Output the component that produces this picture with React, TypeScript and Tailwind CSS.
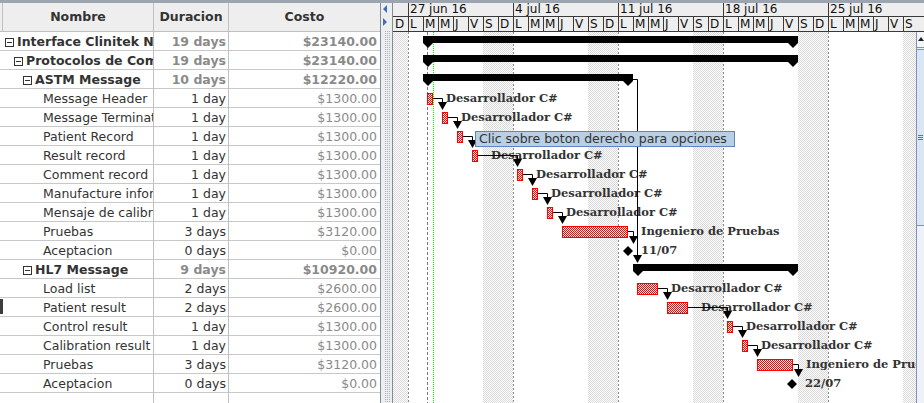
import React from "react";

type Row = {
  name: string;
  level: number;
  group?: boolean;
  dur: string;
  cost: string;
};

const rows: Row[] = [
  { name: "Interface Clinitek Novus", level: 0, group: true, dur: "19 days", cost: "$23140.00" },
  { name: "Protocolos de Comunicacion", level: 1, group: true, dur: "19 days", cost: "$23140.00" },
  { name: "ASTM Message", level: 2, group: true, dur: "10 days", cost: "$12220.00" },
  { name: "Message Header", level: 3, dur: "1 day", cost: "$1300.00" },
  { name: "Message Terminator", level: 3, dur: "1 day", cost: "$1300.00" },
  { name: "Patient Record", level: 3, dur: "1 day", cost: "$1300.00" },
  { name: "Result record", level: 3, dur: "1 day", cost: "$1300.00" },
  { name: "Comment record", level: 3, dur: "1 day", cost: "$1300.00" },
  { name: "Manufacture information", level: 3, dur: "1 day", cost: "$1300.00" },
  { name: "Mensaje de calibracion", level: 3, dur: "1 day", cost: "$1300.00" },
  { name: "Pruebas", level: 3, dur: "3 days", cost: "$3120.00" },
  { name: "Aceptacion", level: 3, dur: "0 days", cost: "$0.00" },
  { name: "HL7 Message", level: 2, group: true, dur: "9 days", cost: "$10920.00" },
  { name: "Load list", level: 3, dur: "2 days", cost: "$2600.00" },
  { name: "Patient result", level: 3, dur: "2 days", cost: "$2600.00" },
  { name: "Control result", level: 3, dur: "1 day", cost: "$1300.00" },
  { name: "Calibration result", level: 3, dur: "1 day", cost: "$1300.00" },
  { name: "Pruebas", level: 3, dur: "3 days", cost: "$3120.00" },
  { name: "Aceptacion", level: 3, dur: "0 days", cost: "$0.00" },
];

// gantt, page coordinates
const top = (r: number) => 31 + 19 * r;

const tasks = [
  { row: 3, x1: 427, x2: 433, label: "Desarrollador C#" },
  { row: 4, x1: 442, x2: 448, label: "Desarrollador C#" },
  { row: 5, x1: 457, x2: 463, label: "Desarrollador C#" },
  { row: 6, x1: 472, x2: 478, label: "Desarrollador C#" },
  { row: 7, x1: 517, x2: 523, label: "Desarrollador C#" },
  { row: 8, x1: 532, x2: 538, label: "Desarrollador C#" },
  { row: 9, x1: 547, x2: 553, label: "Desarrollador C#" },
  { row: 10, x1: 562, x2: 628, label: "Ingeniero de Pruebas" },
  { row: 13, x1: 637, x2: 658, label: "Desarrollador C#" },
  { row: 14, x1: 667, x2: 688, label: "Desarrollador C#" },
  { row: 15, x1: 727, x2: 733, label: "Desarrollador C#" },
  { row: 16, x1: 742, x2: 748, label: "Desarrollador C#" },
  { row: 17, x1: 757, x2: 793, label: "Ingeniero de Pruebas" },
];

const milestones = [
  { row: 11, x: 628, label: "11/07" },
  { row: 18, x: 792, label: "22/07" },
];

const summaries = [
  { row: 0, x1: 423, x2: 798 },
  { row: 1, x1: 423, x2: 798 },
  { row: 2, x1: 423, x2: 633 },
  { row: 12, x1: 633, x2: 798 },
];

// from task row -> vertical x, tip y
const links = [
  { from: 3, nx: 442, tip: top(4) + 3 },
  { from: 4, nx: 457, tip: top(5) + 3 },
  { from: 5, nx: 472, tip: top(6) + 3 },
  { from: 6, nx: 517, tip: top(7) + 3 },
  { from: 7, nx: 532, tip: top(8) + 3 },
  { from: 8, nx: 547, tip: top(9) + 3 },
  { from: 9, nx: 562, tip: top(10) + 3 },
  { from: 10, nx: 633, tip: top(11) + 4 },
  { from: 13, nx: 667, tip: top(14) + 3 },
  { from: 14, nx: 727, tip: top(15) + 3 },
  { from: 15, nx: 742, tip: top(16) + 3 },
  { from: 16, nx: 757, tip: top(17) + 3 },
  { from: 17, nx: 798, tip: top(18) + 4 },
];

const weeks = ["27 jun 16", "4 jul 16", "11 jul 16", "18 jul 16", "25 jul 16"];
const dayNames = ["L", "M", "M", "J", "V", "S", "D"];
const days = ["D", ...Array.from({ length: 34 }, (_, i) => dayNames[i % 7])];

const weekendCols = [393, 483, 588, 693, 798, 903];
const weekLines = [408, 513, 618, 723, 828];

function ToggleBox() {
  return (
    <span className="inline-flex items-center justify-center w-[9px] h-[9px] border border-[#333] mr-[3px] shrink-0">
      <span className="block w-[5px] h-[1px] bg-[#333]" />
    </span>
  );
}

function TaskTable() {
  return (
    <div className="w-[381px] shrink-0 flex flex-col border-r border-[#7f8c9c] bg-white text-[12.5px] overflow-hidden">
      <div className="shrink-0 grid grid-cols-[3px_151px_75px_151px] h-[29px] bg-[#eeeeee] border-b border-[#c0c0c0] font-bold text-[#333]">
        <div className="border-r border-[#c0c0c0]" />
        <div className="border-r border-[#c0c0c0] flex items-center justify-center">Nombre</div>
        <div className="border-r border-[#c0c0c0] flex items-center justify-center">Duracion</div>
        <div className="flex items-center justify-center">Costo</div>
      </div>
      {rows.map((r, i) => (
        <div
          key={i}
          className="shrink-0 grid grid-cols-[3px_151px_75px_151px] h-[19px] border-b border-[#c8c8c8] leading-[19px]"
        >
          <div className="relative">
            {i === 14 && <div className="absolute left-0 top-[1px] w-[3px] h-[15px] bg-[#3c3c3c]" />}
          </div>
          <div
            className={
              "border-r border-[#c0c0c0] flex items-center pt-[1px] overflow-hidden whitespace-nowrap text-[#333] leading-[16px] " +
              (r.group ? "font-bold " : "") +
              (r.level === 0 ? "pl-[2px]" : r.level === 1 ? "pl-[11px]" : r.level === 2 ? "pl-[20px]" : "pl-[40px]")
            }
          >
            {r.group && <ToggleBox />}
            {r.name}
          </div>
          <div
            className={
              "border-r border-[#c0c0c0] text-right pr-[2px] whitespace-nowrap " +
              (r.group ? "font-bold text-[#8a8a8a]" : "text-[#333]")
            }
          >
            {r.dur}
          </div>
          <div className={"text-right pr-[3px] whitespace-nowrap text-[#8a8a8a] " + (r.group ? "font-bold" : "")}>
            {r.cost}
          </div>
        </div>
      ))}
      <div className="shrink-0 grid grid-cols-[3px_151px_75px_151px] h-[19px]">
        <div />
        <div className="border-r border-[#c0c0c0]" />
        <div className="border-r border-[#c0c0c0]" />
        <div />
      </div>
    </div>
  );
}

function Splitter() {
  return (
    <div className="w-[12px] shrink-0 border-r border-[#7f8c9c] bg-[#eeeeee]">
      <svg width="11" height="400" viewBox="0 0 11 400">
        <defs>
          <pattern id="sp" width="2" height="2" patternUnits="userSpaceOnUse">
            <rect width="2" height="2" fill="#eeeeee" />
            <rect width="1" height="1" fill="#a9b2bd" />
          </pattern>
        </defs>
        <polygon points="6,2 6,10 2,6" fill="#3f6fb8" />
        <polygon points="2,15 2,23 6,19" fill="#3f6fb8" />
        <rect x="4" y="28" width="5" height="372" fill="url(#sp)" />
      </svg>
    </div>
  );
}

function GanttHeader() {
  return (
    <div className="shrink-0 h-[29px] bg-[#eeeeee] border-b border-[#3a3a3a] text-[#111] overflow-hidden">
      <div className="flex h-[14px] border-b border-[#3a3a3a] leading-[13px] whitespace-nowrap">
        <div className="w-[15px] shrink-0" />
        {weeks.map((w) => (
          <div key={w} className="w-[105px] shrink-0 border-l border-[#3a3a3a] pl-[1px]">
            {w}
          </div>
        ))}
      </div>
      <div className="flex h-[14px] leading-[14px] whitespace-nowrap">
        {days.map((d, i) => (
          <div
            key={i}
            className={"w-[15px] shrink-0 " + (i === 0 ? "pl-[2px]" : "border-l border-[#3a3a3a] pl-[1px]")}
          >
            {d}
          </div>
        ))}
      </div>
    </div>
  );
}

function GanttBody() {
  return (
    <svg width="523" height="371" viewBox="393 32 523 371" className="block shrink-0">
      <defs>
        <pattern id="dots" width="2" height="2" patternUnits="userSpaceOnUse">
          <rect width="2" height="2" fill="#ffffff" />
          <rect width="1" height="1" fill="#d9d9d9" />
          <rect x="1" y="1" width="1" height="1" fill="#d9d9d9" />
        </pattern>
        <pattern id="red" width="2" height="2" patternUnits="userSpaceOnUse">
          <rect width="2" height="2" fill="#ffffff" />
          <rect width="1" height="1" fill="#ff0000" />
          <rect x="1" y="1" width="1" height="1" fill="#ff0000" />
        </pattern>
      </defs>
      <rect x="393" y="32" width="523" height="371" fill="#ffffff" />
      {weekendCols.map((x) => (
        <rect key={x} x={x} y="32" width={x === 393 ? 15 : 30} height="371" fill="url(#dots)" />
      ))}
      {weekLines.map((x) => (
        <line key={x} x1={x + 0.5} y1="32" x2={x + 0.5} y2="403" stroke="#8a8a8a" strokeDasharray="2 2" />
      ))}
      <line x1="427.5" y1="32" x2="427.5" y2="403" stroke="#777" strokeDasharray="3 2" />
      <line x1="433.5" y1="32" x2="433.5" y2="403" stroke="#22dd22" strokeDasharray="1 1" />

      {summaries.map((s) => {
        const t = top(s.row);
        return (
          <g key={s.row} fill="#000">
            <rect x={s.x1} y={t + 5} width={s.x2 - s.x1} height="7" />
            <polygon points={`${s.x1},${t + 12} ${s.x1 + 10},${t + 12} ${s.x1 + 5},${t + 17}`} />
            <polygon points={`${s.x2 - 10},${t + 12} ${s.x2},${t + 12} ${s.x2 - 5},${t + 17}`} />
          </g>
        );
      })}

      {tasks.map((k) => {
        const t = top(k.row);
        return (
          <rect
            key={k.row}
            x={k.x1 + 0.5}
            y={t + 5.5}
            width={k.x2 - k.x1 - 1}
            height="11"
            fill="url(#red)"
            stroke="#ff0000"
          />
        );
      })}

      {milestones.map((m) => {
        const c = top(m.row) + 11;
        return (
          <polygon key={m.row} points={`${m.x},${c - 5} ${m.x + 5},${c} ${m.x},${c + 5} ${m.x - 5},${c}`} fill="#000" />
        );
      })}

      <g fontFamily="'DejaVu Serif', serif" fontWeight="bold" fontSize="11.5" fill="#333">
        {tasks.map((k) => (
          <text key={k.row} x={k.x2 + 13} y={top(k.row) + 14}>
            {k.label}
          </text>
        ))}
        {milestones.map((m) => (
          <text key={m.row} x={m.x + 13} y={top(m.row) + 14}>
            {m.label}
          </text>
        ))}
      </g>

      {links.map((l) => {
        const task = tasks.find((k) => k.row === l.from)!;
        const y = top(l.from) + 10.5;
        const vx = l.nx + 0.5;
        return (
          <g key={l.from}>
            <path d={`M${task.x2} ${y} H${vx} V${l.tip - 6}`} stroke="#000" fill="none" />
            <polygon points={`${vx - 4.5},${l.tip - 8} ${vx + 4.5},${l.tip - 8} ${vx},${l.tip}`} fill="#000" />
          </g>
        );
      })}
      <path d="M633 79.5 H637.5 V256" stroke="#000" fill="none" />
      <polygon points="633,255 642,255 637.5,263" fill="#000" />
    </svg>
  );
}

function ScrollBar() {
  return (
    <div className="w-[8px] h-[371px] shrink-0 border-l border-[#7d93bd] bg-[#eef2f8] flex flex-col">
      <div className="h-[16px] border-b border-[#7d93bd] bg-[#f4f6fa] flex items-start justify-center pt-[5px]">
        <div className="w-0 h-0 border-l-[3px] border-r-[3px] border-b-[4px] border-l-transparent border-r-transparent border-b-[#222]" />
      </div>
      <div className="mt-[1px] h-[177px] bg-[#dbe5f4] border-y border-[#7d93bd] flex flex-col items-center justify-center gap-[1px]">
        <div className="w-[5px] h-[1px] bg-[#5b74a8]" />
        <div className="w-[5px] h-[1px] bg-[#5b74a8]" />
        <div className="w-[5px] h-[1px] bg-[#5b74a8]" />
      </div>
      <div className="flex-1" />
    </div>
  );
}

export default function App() {
  return (
    <div className="relative w-[924px] h-[403px] overflow-hidden bg-white font-['DejaVu_Sans',sans-serif] text-[12px]">
      <div className="h-[3px] bg-[#9ba4af]" />
      <div className="flex h-[400px]">
        <TaskTable />
        <Splitter />
        <div className="flex-1 flex flex-col">
          <GanttHeader />
          <div className="flex">
            <GanttBody />
            <ScrollBar />
          </div>
        </div>
      </div>
      {/* tooltip over the chart */}
      <div className="absolute left-[475px] top-[131px] w-[260px] h-[16px] bg-[#b8cfe5] border border-[#6382bf] text-[#333] text-[12.5px] leading-[14px] pl-[3px] whitespace-nowrap">
        Clic sobre boton derecho para opciones
      </div>
    </div>
  );
}
